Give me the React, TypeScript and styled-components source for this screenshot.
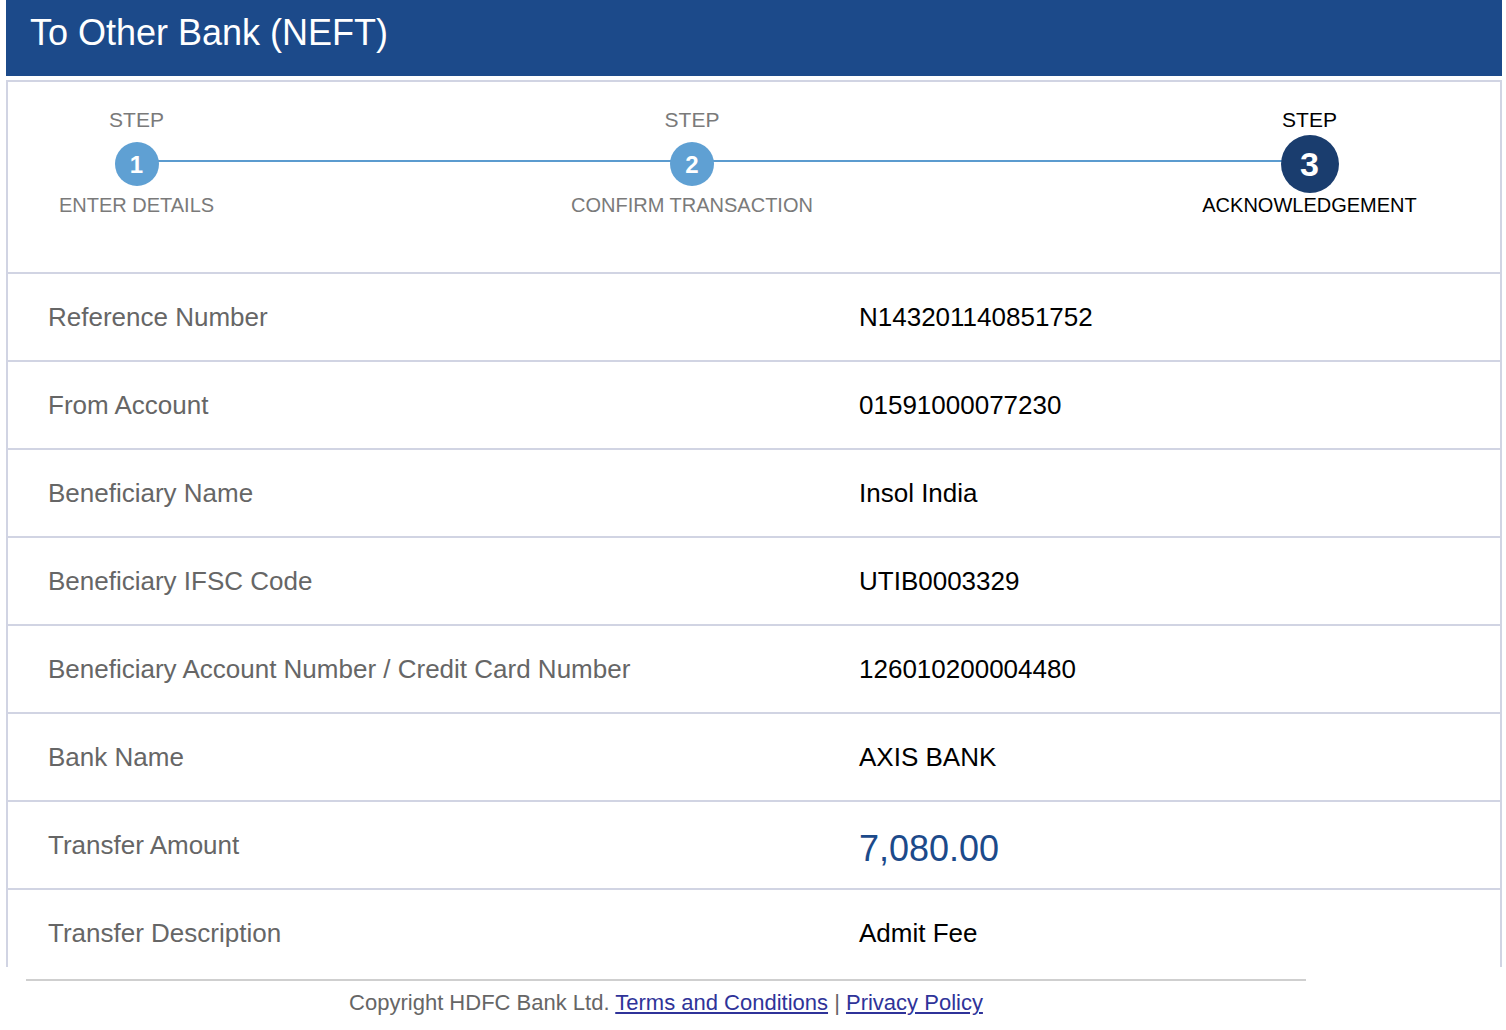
import React from "react";
import styled, { createGlobalStyle } from "styled-components";

const Global = createGlobalStyle`
  html, body { margin: 0; padding: 0; background: #fff; }
  body { font-family: "Liberation Sans", Arial, Helvetica, sans-serif; }
  * { box-sizing: border-box; }
`;

const Page = styled.div`
  width: 1506px;
`;

const Header = styled.header`
  width: 1496px;
  height: 76px;
  margin-left: 6px;
  background: #1c4a8a;
  color: #fff;
  padding: 13px 0 0 24px;
  font-size: 36px;
  line-height: 40px;
`;

const Card = styled.section`
  width: 1496px;
  height: 887px;
  margin: 4px 0 0 6px;
  border: 2px solid #d1d4e3;
  border-bottom: none;
  overflow: hidden;
`;

const Stepper = styled.div`
  position: relative;
  height: 192px;
  padding-top: 26px;
  border-bottom: 2px solid #d1d4e3;
  display: grid;
  grid-template-columns: 257px 854px 381px;
`;

const Connector = styled.div`
  position: absolute;
  top: 78px;
  left: 129px;
  width: 1173px;
  height: 2px;
  background: #5b9bcf;
`;

const Step = styled.div`
  display: flex;
  flex-direction: column;
  align-items: center;
  position: relative;
  z-index: 1;
`;

const StepText = styled.div<{ $active?: boolean; $top?: boolean }>`
  font-size: ${(p) => (p.$top ? 21 : 20)}px;
  line-height: 24px;
  color: ${(p) => (p.$active ? "#000" : "#7a7a7a")};
  white-space: nowrap;
`;

const CircleSlot = styled.div`
  height: 44px;
  margin: 9px 0 8px;
  display: flex;
  align-items: center;
  justify-content: center;
`;

const Circle = styled.div<{ $active?: boolean }>`
  width: ${(p) => (p.$active ? 58 : 44)}px;
  height: ${(p) => (p.$active ? 58 : 44)}px;
  border-radius: 50%;
  flex-shrink: 0;
  background: ${(p) => (p.$active ? "#1a3d6e" : "#5fa0d3")};
  color: #fff;
  font-weight: bold;
  font-size: ${(p) => (p.$active ? 34 : 24)}px;
  padding-top: 2px;
  display: flex;
  align-items: center;
  justify-content: center;
  margin-top: ${(p) => (p.$active ? 1 : 1)}px;
`;

const Row = styled.div`
  height: 88px;
  border-bottom: 2px solid #d1d4e3;
  display: grid;
  grid-template-columns: 851px 1fr;
  align-items: center;
`;

const Label = styled.div`
  padding-left: 40px;
  font-size: 26px;
  color: #666;
`;

const Value = styled.div<{ $amount?: boolean }>`
  font-size: ${(p) => (p.$amount ? 36 : 26)}px;
  color: ${(p) => (p.$amount ? "#1c4a8a" : "#000")};
  margin-top: ${(p) => (p.$amount ? 8 : 0)}px;
`;

const Footer = styled.footer`
  width: 1280px;
  margin: 12px 0 0 26px;
  border-top: 2px solid #cfcfcf;
  padding-top: 9px;
  text-align: center;
  font-size: 22px;
  line-height: 26px;
  color: #666;
`;

const Link = styled.a`
  color: #2f3399;
  text-decoration: underline;
`;

const steps = [
  { label: "ENTER DETAILS", n: 1, active: false },
  { label: "CONFIRM TRANSACTION", n: 2, active: false },
  { label: "ACKNOWLEDGEMENT", n: 3, active: true },
];

const rows: { label: string; value: string; amount?: boolean }[] = [
  { label: "Reference Number", value: "N143201140851752" },
  { label: "From Account", value: "01591000077230" },
  { label: "Beneficiary Name", value: "Insol India" },
  { label: "Beneficiary IFSC Code", value: "UTIB0003329" },
  { label: "Beneficiary Account Number / Credit Card Number", value: "126010200004480" },
  { label: "Bank Name", value: "AXIS BANK" },
  { label: "Transfer Amount", value: "7,080.00", amount: true },
  { label: "Transfer Description", value: "Admit Fee" },
];

export default function App() {
  return (
    <Page>
      <Global />
      <Header>To Other Bank (NEFT)</Header>
      <Card>
        <Stepper>
          <Connector />
          {steps.map((s) => (
            <Step key={s.n}>
              <StepText $active={s.active} $top>
                STEP
              </StepText>
              <CircleSlot>
                <Circle $active={s.active}>{s.n}</Circle>
              </CircleSlot>
              <StepText $active={s.active}>{s.label}</StepText>
            </Step>
          ))}
        </Stepper>
        {rows.map((r) => (
          <Row key={r.label}>
            <Label>{r.label}</Label>
            <Value $amount={r.amount}>{r.value}</Value>
          </Row>
        ))}
      </Card>
      <Footer>
        Copyright HDFC Bank Ltd. <Link href="#">Terms and Conditions</Link> |{" "}
        <Link href="#">Privacy Policy</Link>
      </Footer>
    </Page>
  );
}
